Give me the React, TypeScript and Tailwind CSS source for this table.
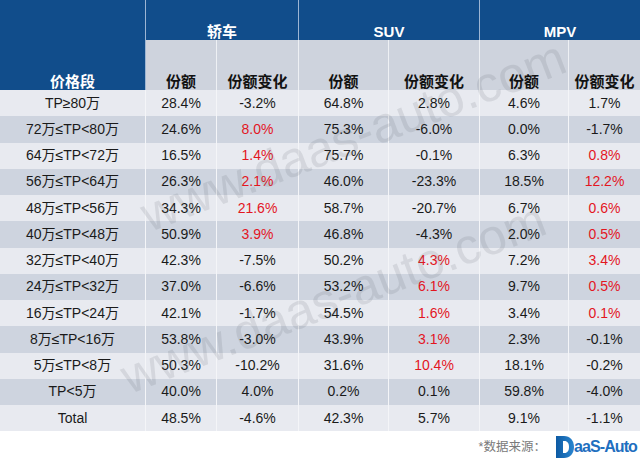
import React from 'react';

type Row = { label: string; vals: string[]; red: number[] };

const rows: Row[] = [
  { label: 'TP≥80万', vals: ['28.4%', '-3.2%', '64.8%', '2.8%', '4.6%', '1.7%'], red: [] },
  { label: '72万≤TP<80万', vals: ['24.6%', '8.0%', '75.3%', '-6.0%', '0.0%', '-1.7%'], red: [1] },
  { label: '64万≤TP<72万', vals: ['16.5%', '1.4%', '75.7%', '-0.1%', '6.3%', '0.8%'], red: [1, 5] },
  { label: '56万≤TP<64万', vals: ['26.3%', '2.1%', '46.0%', '-23.3%', '18.5%', '12.2%'], red: [1, 5] },
  { label: '48万≤TP<56万', vals: ['34.3%', '21.6%', '58.7%', '-20.7%', '6.7%', '0.6%'], red: [1, 5] },
  { label: '40万≤TP<48万', vals: ['50.9%', '3.9%', '46.8%', '-4.3%', '2.0%', '0.5%'], red: [1, 5] },
  { label: '32万≤TP<40万', vals: ['42.3%', '-7.5%', '50.2%', '4.3%', '7.2%', '3.4%'], red: [3, 5] },
  { label: '24万≤TP<32万', vals: ['37.0%', '-6.6%', '53.2%', '6.1%', '9.7%', '0.5%'], red: [3, 5] },
  { label: '16万≤TP<24万', vals: ['42.1%', '-1.7%', '54.5%', '1.6%', '3.4%', '0.1%'], red: [3, 5] },
  { label: '8万≤TP<16万', vals: ['53.8%', '-3.0%', '43.9%', '3.1%', '2.3%', '-0.1%'], red: [3] },
  { label: '5万≤TP<8万', vals: ['50.3%', '-10.2%', '31.6%', '10.4%', '18.1%', '-0.2%'], red: [3] },
  { label: 'TP<5万', vals: ['40.0%', '4.0%', '0.2%', '0.1%', '59.8%', '-4.0%'], red: [] },
  { label: 'Total', vals: ['48.5%', '-4.6%', '42.3%', '5.7%', '9.1%', '-1.1%'], red: [] },
];

const groups = ['轿车', 'SUV', 'MPV'];

const font = { fontFamily: '"Liberation Sans", "Noto Sans CJK SC", sans-serif' };

function Watermark({ left, top }: { left: string; top: string }) {
  return (
    <div
      className={`pointer-events-none absolute whitespace-nowrap text-[50px] leading-none text-[rgba(80,84,96,0.13)] origin-bottom-left -rotate-[21deg] ${left} ${top}`}
    >
      www.daas-auto.com
    </div>
  );
}

function Logo() {
  return (
    <div className="flex items-center">
      <svg width="18" height="22" viewBox="0 0 18 22">
        <defs>
          <linearGradient id="lg" x1="0" x2="1" y1="0" y2="0">
            <stop offset="0" stopColor="#0d5aa3" />
            <stop offset="1" stopColor="#2a86d0" />
          </linearGradient>
        </defs>
        <path d="M0 0 H8 C14 0 18 4.5 18 11 C18 17.5 14 22 8 22 H0 Z" fill="url(#lg)" />
        <path d="M7 5 H8.5 C11.5 5 13 7.5 13 11 C13 14.5 11.5 17 8.5 17 H7 Z" fill="#ffffff" />
      </svg>
      <span className="text-[16px] font-bold tracking-[-0.9px] text-[#1f6fbf] leading-none">aaS-Auto</span>
    </div>
  );
}

export default function App() {
  return (
    <div className="w-[640px] h-[463px] bg-white relative overflow-hidden" style={font}>
      <div className="grid grid-cols-[146px_71px_82px_90px_91px_89px_71px] grid-rows-[40px_50px_repeat(13,26.25px)] text-[14px] text-[#1a1a1a]">
        <div className="row-span-2 bg-[#114d8b] border-r border-[#9db5d3] flex items-end justify-center pb-[1px] text-white font-bold text-[15px] leading-none">
          价格段
        </div>
        {groups.map((g, i) => (
          <div
            key={g}
            className={`col-span-2 bg-[#114d8b] flex items-end justify-center pb-[1px] text-white font-bold text-[15px] leading-none ${i < 2 ? 'border-r border-[#9db5d3]' : ''}`}
          >
            {g}
          </div>
        ))}
        {[0, 1, 2, 3, 4, 5].map((i) => (
          <div
            key={i}
            className={`bg-[#ced3dd] flex items-end justify-center pb-[1px] font-bold text-[15px] leading-none text-[#111] ${i < 5 ? 'border-r border-[#eef0f4]' : ''}`}
          >
            {i % 2 === 0 ? '份额' : '份额变化'}
          </div>
        ))}
        {rows.map((r, ri) => {
          const bg = ri % 2 === 0 ? 'bg-[#e8eaf0]' : 'bg-[#ced4df]';
          return (
            <React.Fragment key={r.label}>
              <div className={`${bg} border-r border-[#f4f5f8] flex items-center justify-center`}>{r.label}</div>
              {r.vals.map((v, vi) => (
                <div
                  key={vi}
                  className={`${bg} flex items-center justify-center ${vi < 5 ? 'border-r border-[#f4f5f8]' : ''} ${r.red.includes(vi) ? 'text-[#e3161f]' : ''}`}
                >
                  {v}
                </div>
              ))}
            </React.Fragment>
          );
        })}
      </div>

      <div className="flex items-center justify-end h-[32px] pr-[3px] gap-[10px]">
        <span className="text-[12.5px] text-[#7a7a7a]">*数据来源：</span>
        <Logo />
      </div>

      <Watermark left="left-[152px]" top="top-[190px]" />
      <Watermark left="left-[132px]" top="top-[352px]" />
    </div>
  );
}
